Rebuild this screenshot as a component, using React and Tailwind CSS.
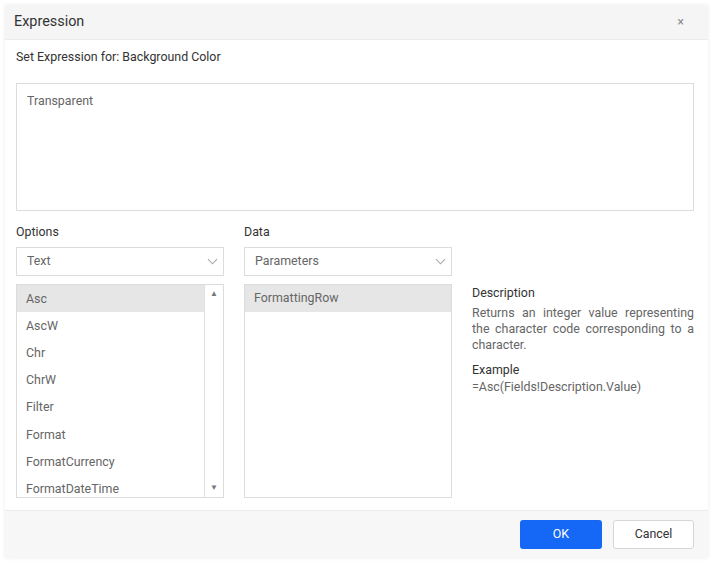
import React from "react";

const items = ["Asc", "AscW", "Chr", "ChrW", "Filter", "Format", "FormatCurrency", "FormatDateTime"];

function Chevron() {
  return (
    <svg width="11" height="7" viewBox="0 0 11 7" fill="none" stroke="#a8a8a8" strokeWidth="1.1">
      <path d="M1 1.2 L5.5 5.8 L10 1.2" />
    </svg>
  );
}

export default function App() {
  return (
    <div className="w-[720px] h-[575px] bg-white pt-[5px] pl-[5px]" style={{ fontFamily: "Roboto, 'Liberation Sans', sans-serif" }}>
      <div className="w-[703px] h-[553px] bg-white flex flex-col shadow-[0_0_4px_rgba(0,0,0,0.08)]">
        <div className="h-[35px] bg-[#f5f5f5] border-b border-[#ececec] flex items-center justify-between pl-[9px] pr-[24px]">
          <span className="text-[14.4px] text-[#333]">Expression</span>
          <span className="text-[12px] text-[#888] leading-none">×</span>
        </div>
        <div className="flex-1 flex flex-col pl-[11px] pr-[14px]">
          <div className="text-[12.4px] text-[#333] mt-[7px] leading-[20px]">Set Expression for: Background Color</div>
          <div className="mt-[16px] h-[128px] border border-[#dcdcdc] px-[10px] py-[8px] text-[12.4px] text-[#666]">Transparent</div>
          <div className="flex mt-[12px]">
            <div className="w-[208px] flex flex-col">
              <div className="text-[12.4px] text-[#333] leading-[18px]">Options</div>
              <div className="mt-[6px] h-[29px] border border-[#dcdcdc] flex items-center justify-between pl-[10px] pr-[5px]">
                <span className="text-[12.4px] text-[#666]">Text</span>
                <Chevron />
              </div>
              <div className="mt-[8px] h-[214px] border border-[#dcdcdc] flex overflow-hidden">
                <div className="flex-1 flex flex-col overflow-hidden">
                  {items.map((it, i) => (
                    <div key={it} className={`h-[27.2px] shrink-0 flex items-center pl-[9px] text-[12.4px] leading-[14px] text-[#666] ${i === 0 ? "bg-[#e6e6e6]" : ""}`}>{it}</div>
                  ))}
                </div>
                <div className="w-[19px] border-l border-[#e2e2e2] flex flex-col items-center justify-between py-[5px]">
                  <span className="text-[8px] text-[#777] leading-none">▲</span>
                  <span className="text-[8px] text-[#777] leading-none">▼</span>
                </div>
              </div>
            </div>
            <div className="w-[208px] ml-[20px] flex flex-col">
              <div className="text-[12.4px] text-[#333] leading-[18px]">Data</div>
              <div className="mt-[6px] h-[29px] border border-[#dcdcdc] flex items-center justify-between pl-[10px] pr-[5px]">
                <span className="text-[12.4px] text-[#666]">Parameters</span>
                <Chevron />
              </div>
              <div className="mt-[8px] h-[214px] border border-[#dcdcdc] flex flex-col">
                <div className="h-[27.2px] shrink-0 flex items-center pl-[9px] text-[12.4px] text-[#666] bg-[#e6e6e6]">FormattingRow</div>
              </div>
            </div>
            <div className="flex-1 ml-[20px] pt-[62px]">
              <div className="text-[12.4px] text-[#333] leading-[16px] mb-[4px]">Description</div>
              <div className="text-[12.4px] text-[#666] leading-[16px] text-justify">Returns an integer value representing the character code corresponding to a character.</div>
              <div className="text-[12.4px] text-[#333] leading-[16px] mt-[9px] mb-[1px]">Example</div>
              <div className="text-[12.4px] text-[#666] leading-[16px]">=Asc(Fields!Description.Value)</div>
            </div>
          </div>
        </div>
        <div className="h-[48px] bg-[#f7f7f7] border-t border-[#ececec] flex items-center justify-end gap-[11px] pr-[14px]">
          <button className="w-[82px] h-[29px] bg-[#1468f5] rounded-[3px] text-white text-[12.4px]">OK</button>
          <button className="w-[81px] h-[29px] bg-white border border-[#d6d6d6] rounded-[3px] text-[#333] text-[12.4px]">Cancel</button>
        </div>
      </div>
    </div>
  );
}
